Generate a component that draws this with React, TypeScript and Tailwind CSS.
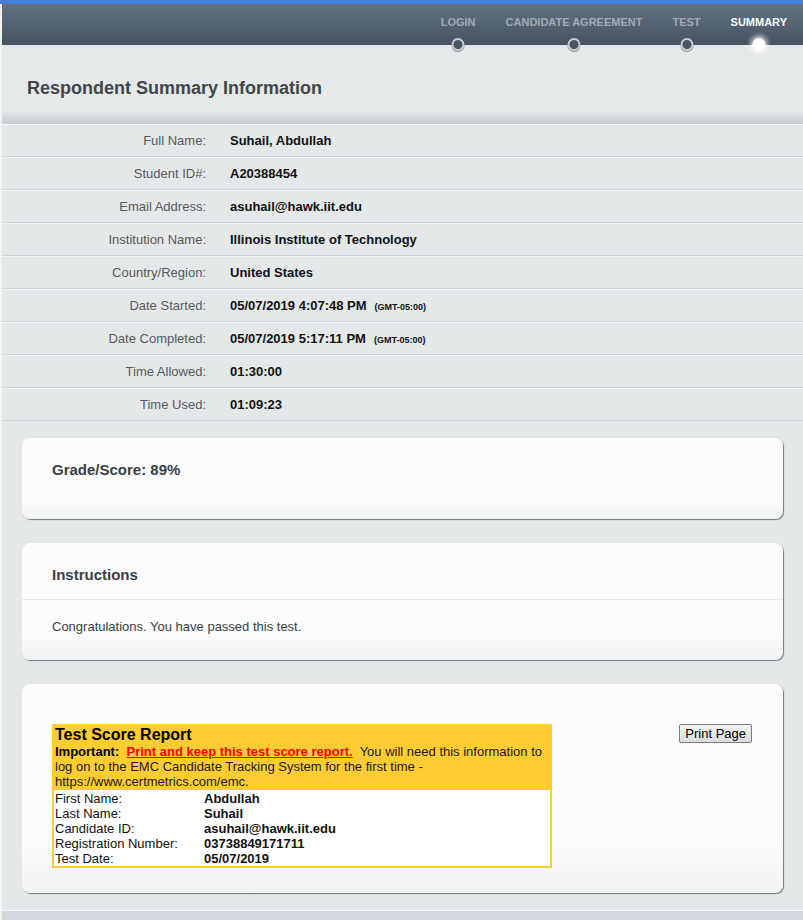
import React from "react";

const rows: { label: string; value: string; tz?: boolean }[] = [
  { label: "Full Name:", value: "Suhail, Abdullah" },
  { label: "Student ID#:", value: "A20388454" },
  { label: "Email Address:", value: "asuhail@hawk.iit.edu" },
  { label: "Institution Name:", value: "Illinois Institute of Technology" },
  { label: "Country/Region:", value: "United States" },
  { label: "Date Started:", value: "05/07/2019 4:07:48 PM", tz: true },
  { label: "Date Completed:", value: "05/07/2019 5:17:11 PM", tz: true },
  { label: "Time Allowed:", value: "01:30:00" },
  { label: "Time Used:", value: "01:09:23" },
];

const steps = [
  { label: "LOGIN", active: false },
  { label: "CANDIDATE AGREEMENT", active: false },
  { label: "TEST", active: false },
  { label: "SUMMARY", active: true },
];

const report: [string, string][] = [
  ["First Name:", "Abdullah"],
  ["Last Name:", "Suhail"],
  ["Candidate ID:", "asuhail@hawk.iit.edu"],
  ["Registration Number:", "03738849171711"],
  ["Test Date:", "05/07/2019"],
];

const card =
  "mx-[20px] rounded-[8px] bg-[linear-gradient(to_bottom,#fcfcfc_75%,#f2f3f3)] shadow-[1px_1px_1px_rgba(90,100,112,0.85),0_0_1px_rgba(0,0,0,0.15)]";

export default function App() {
  return (
    <div className="w-[803px] h-[920px] overflow-hidden bg-[#e5e8e9] font-['Liberation_Sans',Arial,sans-serif] flex flex-col">
      <div className="h-[4px] bg-[#3f80dc]" />
      <div className="flex-1 flex flex-col border-l-2 border-[#f2f3f4]">
        {/* header */}
        <div className="relative h-[41px] bg-[linear-gradient(to_bottom,#627284,#46525f)] flex justify-end items-start gap-[30px] pr-[16px] pt-[11px]">
          {steps.map((s) => (
            <div key={s.label} className="relative h-[14px] text-[11px] leading-[14px]">
              <span
                className={`block font-bold whitespace-nowrap ${
                  s.active ? "text-white" : "text-[#a3abb3]"
                }`}
              >
                {s.label}
              </span>
              <span
                className={`absolute left-1/2 top-[23px] -translate-x-1/2 w-[13px] h-[13px] rounded-full ${
                  s.active
                    ? "bg-white shadow-[0_0_5px_2px_rgba(255,255,255,0.8)]"
                    : "bg-[#4a5563] border-2 border-[#c6ccd2] shadow-[0_1px_1px_rgba(0,0,0,0.4)]"
                }`}
              />
            </div>
          ))}
        </div>

        {/* title */}
        <div className="h-[79px] bg-[linear-gradient(to_bottom,#e6e9ea_82%,#c9ced1)] flex items-center pl-[25px] pt-[8px]">
          <h1 className="text-[18px] font-bold text-[#40464b]">Respondent Summary Information</h1>
        </div>

        {/* rows */}
        <div className="border-t border-[#fafbfb]">
          {rows.map((r) => (
            <div
              key={r.label}
              className="h-[33px] flex items-center border-b border-[#cfd3d5] border-t border-t-[#f3f4f5] first:border-t-0 first:h-[32px]"
            >
              <div className="w-[204px] text-right text-[13px] text-[#555a5e]">{r.label}</div>
              <div className="pl-[24px] text-[13px] font-bold text-[#111]">
                {r.value}
                {r.tz && <span className="ml-[8px] text-[9px] font-bold">(GMT-05:00)</span>}
              </div>
            </div>
          ))}
        </div>

        {/* cards */}
        <div className="flex flex-col gap-[24px] pt-[17px]">
          <div className={`${card} h-[81px] pl-[30px] pt-[23px]`}>
            <div className="text-[15px] leading-[18px] font-bold text-[#3a3f44]">Grade/Score: 89%</div>
          </div>

          <div className={`${card} h-[117px]`}>
            <div className="h-[57px] border-b border-[#e8eaeb] pl-[30px] pt-[23px]">
              <div className="text-[15px] leading-[18px] font-bold text-[#3a3f44]">Instructions</div>
            </div>
            <div className="pl-[30px] pt-[19px] text-[13px] leading-[16px] text-[#3a3f44]">
              Congratulations. You have passed this test.
            </div>
          </div>

          <div className={`${card} h-[209px] pt-[40px] pl-[30px] pr-[31px] flex justify-between items-start`}>
            <div className="w-[500px] border-2 border-[#ffcc33] bg-white text-[#111]">
              <div className="bg-[#ffcc33] px-[1px] pb-[1px]">
                <div className="text-[16px] leading-[18px] font-bold text-black">Test Score Report</div>
                <div className="text-[13px] leading-[15px] text-[#1a1a1a]">
                  <b className="text-black">Important:</b>{"\u00a0 "}
                  <span className="font-bold text-[#ff0000] underline">Print and keep this test score report.</span>
                  {"\u00a0 "}You will need this information to log on to the EMC Candidate Tracking System for the first time - https://www.certmetrics.com/emc.
                </div>
              </div>
              <div className="px-[1px] pt-[1px]">
                {report.map(([l, v]) => (
                  <div key={l} className="grid grid-cols-[149px_1fr] text-[13px] leading-[15px]">
                    <span>{l}</span>
                    <span className="font-bold">{v}</span>
                  </div>
                ))}
              </div>
            </div>
            <button className="h-[19px] px-[5px] border border-[#7a7a7a] rounded-[2px] bg-[linear-gradient(to_bottom,#f4f4f4,#dcdcdc)] text-[13px] leading-[17px] text-black font-['Liberation_Sans',Arial,sans-serif]">
              Print Page
            </button>
          </div>
        </div>

        <div className="flex-1" />
        <div className="h-[10px] border-t border-[#f4f5f6] bg-[#d3d7de]" />
      </div>
    </div>
  );
}
